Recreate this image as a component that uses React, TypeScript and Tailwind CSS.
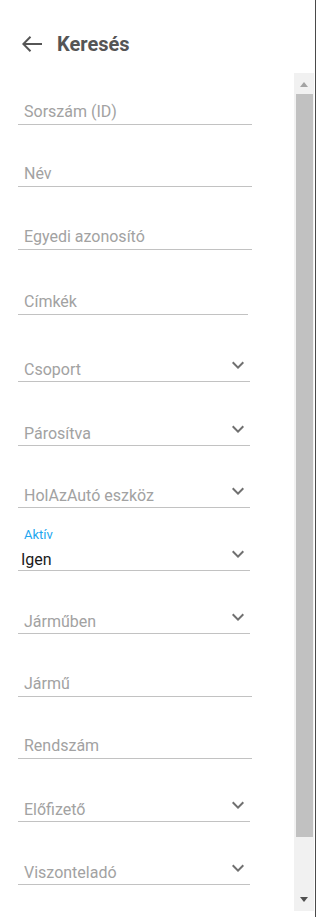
import React from "react";

type Field = {
  label: string;
  h: string;
  kind: "text" | "select" | "chips" | "value";
  value?: string;
};

const fields: Field[] = [
  { label: "Sorszám (ID)", h: "h-[52px]", kind: "text" },
  { label: "Név", h: "h-[62px]", kind: "text" },
  { label: "Egyedi azonosító", h: "h-[63px]", kind: "text" },
  { label: "Címkék", h: "h-[65px]", kind: "chips" },
  { label: "Csoport", h: "h-[67px]", kind: "select" },
  { label: "Párosítva", h: "h-[64px]", kind: "select" },
  { label: "HolAzAutó eszköz", h: "h-[62px]", kind: "select" },
  { label: "Aktív", h: "h-[63px]", kind: "value", value: "Igen" },
  { label: "Járműben", h: "h-[63px]", kind: "select" },
  { label: "Jármű", h: "h-[63px]", kind: "text" },
  { label: "Rendszám", h: "h-[62px]", kind: "text" },
  { label: "Előfizető", h: "h-[63px]", kind: "select" },
  { label: "Viszonteladó", h: "h-[63px]", kind: "select" },
];

const Chevron = () => (
  <svg width="24" height="24" viewBox="0 0 24 24" className="mb-[4px] shrink-0">
    <path d="M16.59 8.59L12 13.17 7.41 8.59 6 10l6 6 6-6z" fill="#707070" />
  </svg>
);

const FieldRow: React.FC<{ field: Field }> = ({ field }) => {
  if (field.kind === "text" || field.kind === "chips") {
    return (
      <div className={`${field.h} flex flex-col justify-end`}>
        <div
          className={`${field.kind === "chips" ? "w-[230px]" : "w-[234px]"} border-b border-[#c2c2c2] pl-[6px] pb-[3px] text-[16px] leading-[19px] text-[#a2a2a2]`}
        >
          {field.label}
        </div>
      </div>
    );
  }
  if (field.kind === "value") {
    return (
      <div className={`${field.h} flex flex-col justify-end`}>
        <div className="pl-[6px] text-[13px] leading-[15px] text-[#1ea6ef]">
          {field.label}
        </div>
        <div className="flex w-[232px] items-end justify-between border-b border-[#c2c2c2]">
          <span className="pl-[3px] pb-[1px] text-[16px] leading-[19px] text-[#1a1a1a]">
            {field.value}
          </span>
          <Chevron />
        </div>
      </div>
    );
  }
  return (
    <div className={`${field.h} flex flex-col justify-end`}>
      <div className="flex w-[232px] items-end justify-between border-b border-[#c2c2c2]">
        <span className="pl-[6px] pb-[2px] text-[16px] leading-[19px] text-[#a2a2a2]">
          {field.label}
        </span>
        <Chevron />
      </div>
    </div>
  );
};

const Scrollbar = () => (
  <div className="mb-[6px] flex w-[20px] flex-col bg-[#f1f1f1]">
    <div className="flex h-[21px] items-center justify-center pt-[2px]">
      <svg width="8" height="5" viewBox="0 0 8 5">
        <polygon points="0,5 8,5 4,0" fill="#a3a3a3" />
      </svg>
    </div>
    <div className="ml-[2px] h-[743px] w-[17px] bg-[#c1c1c1]" />
    <div className="flex-1" />
    <div className="flex h-[24px] items-center justify-center">
      <svg width="8" height="5" viewBox="0 0 8 5">
        <polygon points="0,0 8,0 4,5" fill="#505050" />
      </svg>
    </div>
  </div>
);

export default function App() {
  return (
    <div
      className="flex h-[917px] w-[316px] flex-col overflow-hidden border-r border-[#4a4a4a] bg-white"
      style={{ fontFamily: "Roboto, 'Liberation Sans', sans-serif" }}
    >
      <header className="h-[73px] shrink-0 pl-[22px] pt-[32px]">
        <div className="flex h-[24px] items-center">
          <svg width="20" height="16" viewBox="0 0 20 16" className="shrink-0">
            <path
              d="M1 8H20M8.5 0.8L1.3 8L8.5 15.2"
              fill="none"
              stroke="#555555"
              strokeWidth="2"
            />
          </svg>
          <h1 className="ml-[15px] text-[20px] font-bold leading-[24px] text-[#555555]">
            Keresés
          </h1>
        </div>
      </header>
      <div className="flex min-h-0 flex-1">
        <div className="w-[294px] overflow-hidden pl-[18px]">
          {fields.map((f) => (
            <FieldRow key={f.label} field={f} />
          ))}
        </div>
        <Scrollbar />
        <div className="w-[1px]" />
      </div>
    </div>
  );
}
